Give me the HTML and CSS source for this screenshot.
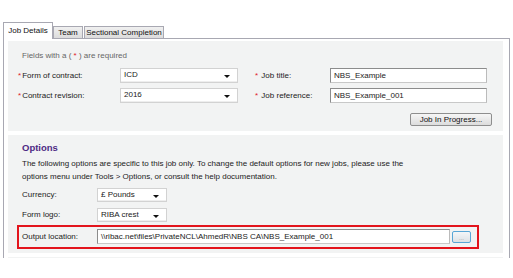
FILE: index.html
```html
<!DOCTYPE html>
<html>
<head>
<meta charset="utf-8">
<link rel="stylesheet" href="styles.css">
</head>
<body>
<div class="page">
  <div class="tabs">
    <div class="tab active">Job Details</div>
    <div class="tab team">Team</div>
    <div class="tab sect">Sectional Completion</div>
  </div>
  <div class="panel">
    <div class="sec sec1">
      <p class="note">Fields with a ( <span class="req">*</span> ) are required</p>
      <div class="form">
        <div class="lbl"><span class="req">*</span>Form of contract:</div>
        <div class="sel w118"><span>ICD</span><i class="arrow"></i></div>
        <div></div>
        <div class="lbl"><span class="req">*</span> Job title:</div>
        <div class="inp">NBS_Example</div>
        <div class="lbl"><span class="req">*</span>Contract revision:</div>
        <div class="sel w118"><span>2016</span><i class="arrow"></i></div>
        <div></div>
        <div class="lbl"><span class="req">*</span> Job reference:</div>
        <div class="inp">NBS_Example_001</div>
      </div>
      <div class="btnrow"><div class="btn">Job In Progress...</div></div>
    </div>
    <div class="sec sec2">
      <h2 class="head">Options</h2>
      <p class="desc">The following options are specific to this job only. To change the default options for new jobs, please use the<br>options menu under Tools &gt; Options, or consult the help documentation.</p>
      <div class="opts">
        <div class="olbl">Currency:</div>
        <div class="sel w70"><span>£ Pounds</span><i class="arrow"></i></div>
        <div class="olbl">Form logo:</div>
        <div class="sel w70"><span>RIBA crest</span><i class="arrow"></i></div>
      </div>
      <div class="outbox">
        <div class="olbl">Output location:</div>
        <div class="inp outinp">\\ribac.net\files\PrivateNCL\AhmedR\NBS CA\NBS_Example_001</div>
        <div class="browse">...</div>
      </div>
    </div>
    <div class="sec sec3"></div>
  </div>
</div>
</body>
</html>
```

FILE: styles.css
```css
* { box-sizing: border-box; }
body {
  margin: 0;
  background: #ffffff;
  font-family: "Liberation Sans", Arial, sans-serif;
  font-size: 8px;
  color: #222;
}
.page {
  padding: 22px 0 0 3px;
  width: 510px;
}
.tabs {
  display: flex;
  align-items: flex-end;
  height: 16px;
}
.tab {
  border: 1px solid #a8a8b2;
  border-bottom: none;
  height: 12px;
  line-height: 11px;
  text-align: center;
  background: linear-gradient(#f0f0f0, #dcdcdc);
  color: #111;
}
.tab.active {
  width: 50px;
  height: 17px;
  line-height: 16px;
  background: #fff;
  position: relative;
  z-index: 2;
  margin-bottom: -1px;
}
.tab.team { width: 30px; }
.tab.sect { width: 80px; margin-left: 1px; }
.panel {
  border: 1px solid #a8a8b2;
  border-bottom: none;
  height: 220px;
  padding: 2px 6px 0 4px;
}
.sec { background: #f2f3f3; }
.sec1 {
  height: 90px;
  padding: 9px 11px 0 10px;
  margin-bottom: 4px;
}
.sec2 {
  height: 118px;
  padding: 7px 0 0 14px;
  margin-bottom: 4px;
}
.sec3 { height: 4px; }
.note {
  margin: 0 0 0 4px;
  line-height: 12px;
  color: #666;
}
.req { color: #e0202a; }
.form {
  margin-top: 6px;
  display: grid;
  grid-template-columns: 102px 118px 17px 75px 157px;
  grid-auto-rows: 15px;
  row-gap: 5px;
}
.lbl { line-height: 15px; }
.lbl .req { margin-right: 1px; }
.sel {
  position: relative;
  height: 15px;
  background: #fff;
  border: 1px solid #d2d2d2;
  box-shadow: inset 0 -1px 0 #eee;
  padding-left: 3px;
  line-height: 12px;
}
.w118 { width: 118px; }
.w70 { width: 70px; height: 14px; }
.arrow {
  position: absolute;
  right: 7px;
  top: 6px;
  width: 0;
  height: 0;
  border-left: 3px solid transparent;
  border-right: 3px solid transparent;
  border-top: 3px solid #111;
}
.inp {
  height: 15px;
  background: #fff;
  border: 1px solid #8c8c8c;
  border-right-color: #bbb;
  border-bottom-color: #c8c8c8;
  padding-left: 3px;
  line-height: 13px;
  white-space: nowrap;
  overflow: hidden;
}
.btnrow {
  margin-top: 10px;
  display: flex;
  justify-content: flex-end;
}
.btn {
  width: 82px;
  height: 13px;
  border: 1px solid #8e8e8e;
  border-radius: 2px;
  background: linear-gradient(#f6f6f6, #dcdcdc);
  text-align: center;
  line-height: 11px;
  color: #111;
}
.head {
  margin: 0 0 3px 0;
  font-size: 9.5px;
  font-weight: bold;
  line-height: 12px;
  color: #4e2a84;
}
.desc {
  margin: 0;
  line-height: 13px;
  color: #222;
}
.opts {
  margin-top: 5px;
  display: grid;
  grid-template-columns: 75px 70px;
  grid-auto-rows: 14px;
  row-gap: 6px;
}
.olbl { line-height: 14px; }
.outbox {
  margin: 3px 0 0 -5px;
  width: 462px;
  height: 24px;
  border: 2px solid #e3141c;
  display: flex;
  align-items: flex-start;
  padding: 2px 5px 0 3px;
}
.outbox .olbl { width: 75px; line-height: 15px; }
.outinp { width: 353px; }
.browse {
  margin: 2px 0 0 2px;
  width: 19px;
  height: 12px;
  border: 1px solid #58a6d6;
  border-radius: 2px;
  background: linear-gradient(#f4f6f8, #dde2e6);
  color: #999;
  font-size: 6px;
  text-align: center;
  line-height: 12px;
}
```
